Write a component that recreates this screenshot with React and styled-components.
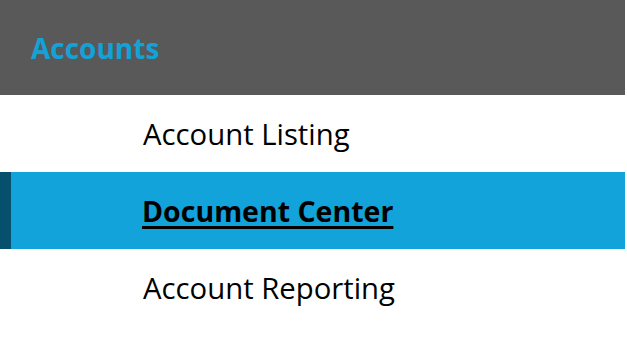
import React from "react";
import styled, { createGlobalStyle } from "styled-components";

const GlobalStyle = createGlobalStyle`
	body {
		margin: 0;
		background: #ffffff;
		font-family: "Open Sans", "Noto Sans", sans-serif;
	}
`;

const Panel = styled.nav`
	width: 625px;
	display: flex;
	flex-direction: column;
`;

const Header = styled.div`
	height: 95px;
	background: #595959;
	display: flex;
	align-items: center;
	padding-left: 31px;
	box-sizing: border-box;
`;

const Title = styled.h2`
	margin: 0;
	font-size: 28px;
	font-weight: 700;
	color: #13a2d8;
`;

const Item = styled.a`
	height: 77px;
	display: flex;
	align-items: center;
	box-sizing: border-box;
	color: #000000;
	text-decoration: none;
	background: ${(props) => (props.active ? "#11a3d9" : "#ffffff")};
	border-left: ${(props) => (props.active ? "11px solid #064f6d" : "none")};
	padding-left: ${(props) => (props.active ? "131px" : "143px")};
	font-size: ${(props) => (props.active ? "28.5px" : "29.3px")};
	font-weight: ${(props) => (props.active ? 700 : 400)};

	span {
		text-decoration: ${(props) => (props.active ? "underline" : "none")};
		text-decoration-thickness: 3px;
		text-underline-offset: 4px;
	}
`;

const items = [
	{ label: "Account Listing" },
	{ label: "Document Center", active: true },
	{ label: "Account Reporting" },
];

const App = () => {
	return (
		<>
			<GlobalStyle />
			<Panel>
				<Header>
					<Title>Accounts</Title>
				</Header>
				{items.map((item) => (
					<Item key={item.label} href="#" active={item.active ? 1 : 0}>
						<span>{item.label}</span>
					</Item>
				))}
			</Panel>
		</>
	);
};

export default App;
